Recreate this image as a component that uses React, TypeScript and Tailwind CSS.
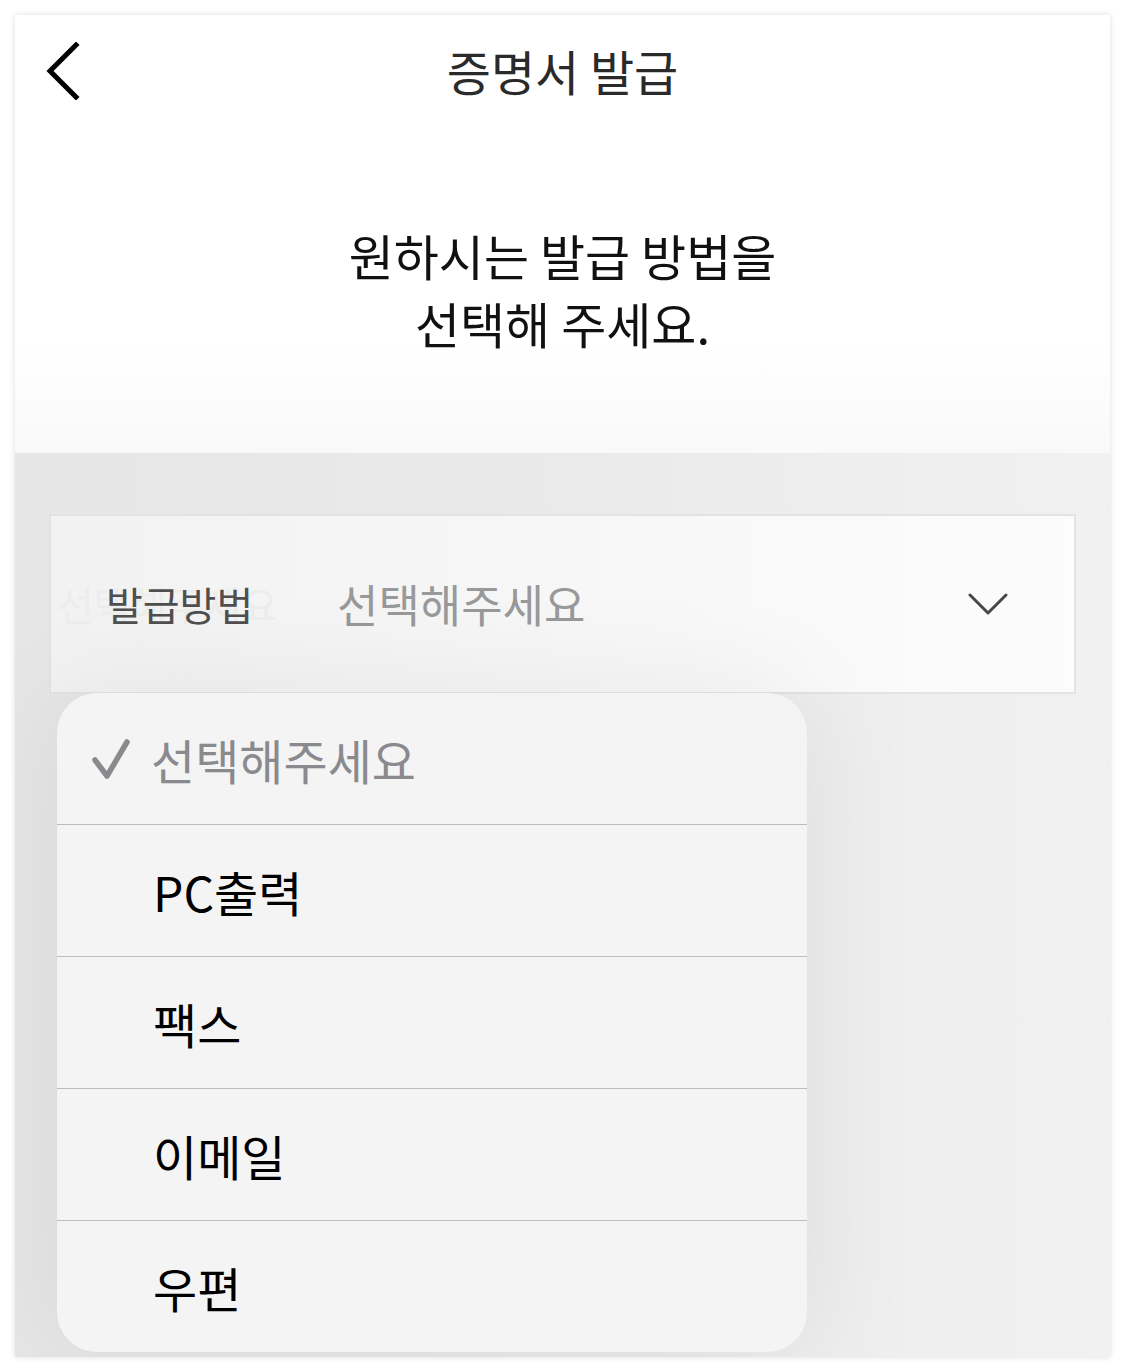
const options = ['PC출력', '팩스', '이메일', '우편'];

function BackIcon() {
  return (
    <svg width="36" height="58" viewBox="0 0 36 58" fill="none" aria-hidden="true">
      <path d="M31 3L5 29l26 26" stroke="#000" strokeWidth="5" strokeLinecap="square" />
    </svg>
  );
}

function ChevronDown() {
  return (
    <svg width="40" height="24" viewBox="0 0 40 24" fill="none" aria-hidden="true">
      <path d="M2 3l18 18L38 3" stroke="#474747" strokeWidth="3" strokeLinecap="round" strokeLinejoin="round" />
    </svg>
  );
}

function CheckMark() {
  return (
    <svg width="40" height="42" viewBox="0 0 40 42" fill="none" aria-hidden="true">
      <path d="M4 22l12 16L36 4" stroke="#8a8a8e" strokeWidth="5.5" strokeLinecap="round" strokeLinejoin="round" />
    </svg>
  );
}

export default function App() {
  const font = { fontFamily: '"Noto Sans CJK KR", "Noto Sans", sans-serif' };

  return (
    <div className="w-[1125px] h-[1371px] bg-white p-[15px] overflow-hidden" style={font}>
      <div className="relative w-[1095px] h-[1342px] flex flex-col shadow-[0_0_6px_rgba(0,0,0,0.14)] overflow-hidden">
        {/* top */}
        <div className="h-[438px] bg-gradient-to-b from-white from-75% to-[#f9f9f9] flex flex-col">
          <div className="relative h-[114px] flex items-center justify-center">
            <div className="absolute left-[30px] top-[27px]">
              <BackIcon />
            </div>
            <h1 className="text-[48px] text-[#2a2a2a] leading-none -mt-[4px]">증명서 발급</h1>
          </div>
          <p className="mt-[92px] text-center text-[49px] leading-[68px] text-[#111]">
            원하시는 발급 방법을
            <br />
            선택해 주세요.
          </p>
        </div>

        {/* gray area */}
        <div className="flex-1 bg-gradient-to-r from-[#e6e6e6] via-[#eaeaea] to-[#f1f1f1] pt-[61px] px-[34px]">
          <div className="relative h-[180px] border-2 border-[#e3e3e3] bg-gradient-to-r from-[#f2f2f2] to-[#fcfcfc] flex items-center pl-[55px] pr-[66px]">
            <span aria-hidden="true" className="absolute left-[6px] text-[40px] text-[#ededed]">선택해주세요</span>
            <span className="relative w-[231px] text-[40px] text-[#4f4f4f]">발급방법</span>
            <span className="flex-1 text-[45px] text-[#999]">선택해주세요</span>
            <ChevronDown />
          </div>
        </div>

        {/* dropdown menu */}
        <div className="absolute left-[42px] top-[678px] w-[750px] bg-[#f4f4f4] rounded-[40px] overflow-hidden shadow-[0_0_120px_rgba(0,0,0,0.07)]">
          <div className="h-[131px] flex items-center pl-[34px]">
            <CheckMark />
            <span className="ml-[20px] text-[48px] text-[#8a8a8e]">선택해주세요</span>
          </div>
          {options.map((opt) => (
            <div key={opt} className="h-[132px] border-t border-[#bcbcbc] flex items-center pl-[96px]">
              <span className="text-[48px] text-black">{opt}</span>
            </div>
          ))}
        </div>
      </div>
    </div>
  );
}
